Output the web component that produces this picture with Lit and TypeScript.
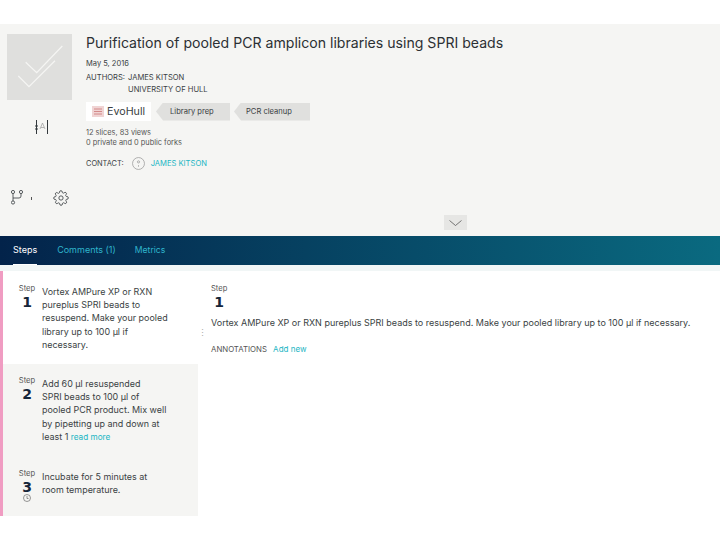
import { LitElement, css, html } from 'lit';
import { customElement } from 'lit/decorators.js';

const steps = [
  { n: 1, text: html`Vortex AMPure XP or RXN<br />pureplus SPRI beads to<br />resuspend. Make your pooled<br />library up to 100 µl if<br />necessary.`, h: 93, top: 14 },
  { n: 2, text: html`Add 60 µl resuspended<br />SPRI beads to 100 µl of<br />pooled PCR product. Mix well<br />by pipetting up and down at<br />least 1 <a>read more</a>`, h: 93, top: 13 },
  { n: 3, text: html`Incubate for 5 minutes at<br />room temperature.`, h: 59, top: 13, timer: true },
];

@customElement('app-root')
export class AppRoot extends LitElement {
  static get styles() {
    return css`
      :host {
        display: block;
        width: 720px;
        height: 540px;
        background: #fff;
        overflow: hidden;
        font-family: 'Inter', 'Liberation Sans', sans-serif;
        color: #3a3f43;
        padding-top: 24px;
        box-sizing: border-box;
      }
      a { color: #22b5c4; }
      .header {
        height: 212px;
        background: #f5f5f3;
        display: flex;
        padding: 10px 0 0 7px;
        box-sizing: border-box;
        position: relative;
      }
      .rail { width: 79px; flex: none; }
      .thumb {
        width: 65px;
        height: 66px;
        background: #dfdfdd;
        display: block;
      }
      .scale { margin: 20px 0 0 28px; display: block; }
      .rail-icons {
        display: flex;
        align-items: center;
        margin: 56px 0 0 4px;
      }
      .tick { width: 1px; height: 3px; background: #555; margin: 0 21px 0 7px; }
      .title {
        font-size: 14.1px;
        line-height: 18px;
        margin: 0;
        font-weight: 400;
        color: #2c3034;
      }
      .date { font-size: 7.5px; line-height: 10px; margin-top: 7px; }
      .authors { display: flex; font-size: 7.6px; line-height: 11.5px; margin-top: 3px; }
      .authors .label { width: 42px; }
      .tags { display: flex; align-items: center; margin-top: 7px; }
      .brand {
        width: 65px;
        height: 19px;
        background: #fff;
        display: flex;
        align-items: center;
        padding-left: 6px;
        box-sizing: border-box;
        gap: 3px;
        font-size: 10.7px;
      }
      .tag {
        height: 18px;
        width: 74px;
        margin-left: 5px;
        background: #e0e0de;
        clip-path: polygon(7px 0, 100% 0, 100% 100%, 7px 100%, 0 50%);
        font-size: 7.6px;
        line-height: 18px;
        padding-left: 14px;
        box-sizing: border-box;
      }
      .tag + .tag { margin-left: 4px; width: 76px; padding-left: 12px; }
      .counts { font-size: 7.4px; line-height: 9.5px; margin-top: 7px; color: #555; }
      .contact { display: flex; align-items: center; font-size: 7.4px; margin-top: 10px; }
      .contact a { margin-left: 6px; font-size: 7.6px; }
      .contact svg { margin-left: 8px; }
      .toggle {
        position: absolute;
        left: 444px;
        top: 191px;
        width: 23px;
        height: 15px;
        background: #e6e6e4;
        display: flex;
        align-items: center;
        justify-content: center;
      }
      .nav {
        height: 29px;
        background: linear-gradient(90deg, #03234a, #0a6a80);
        display: flex;
        gap: 20px;
        padding-left: 13px;
        font-size: 9px;
      }
      .nav div {
        color: #2fb5cc;
        line-height: 28px;
        height: 29px;
        box-sizing: border-box;
      }
      .nav div:last-child { margin-left: -1px; font-size: 8.6px; }
      .nav .on { color: #fff; border-bottom: 1px solid #fff; }
      .strip { height: 6px; background: #f1f6f6; }
      .body { display: flex; }
      .list {
        width: 198px;
        flex: none;
        border-left: 3px solid #f09cc2;
        box-sizing: border-box;
        background: #fff;
      }
      .item {
        display: flex;
        box-sizing: border-box;
        padding-left: 12px;
      }
      .item + .item { background: #f5f5f3; }
      .num { width: 24px; flex: none; text-align: center; margin-right: 3px; }
      .num small { display: block; font-size: 7.6px; line-height: 8px; color: #555; }
      .num b { display: block; font-size: 14px; line-height: 16px; margin-top: 1px; color: #15263a; font-family: 'DejaVu Sans', sans-serif; }
      .timer { display: block; margin: -1px auto 0; }
      .item p { margin: 0; font-size: 8.95px; line-height: 13.2px; }
      .item a { font-size: 8.2px; }
      .dots {
        width: 5px;
        flex: none;
        text-align: center;
        color: #aaa;
        font-size: 9px;
        line-height: 3px;
        padding-top: 60px;
      }
      .detail { padding: 14px 0 0 8px; }
      .detail small { display: block; font-size: 7.6px; line-height: 8px; color: #555; }
      .detail b { display: block; margin-left: 3px; width: 10px; text-align: center; font-size: 14px; line-height: 16px; margin-top: 1px; color: #15263a; font-family: 'DejaVu Sans', sans-serif; }
      .detail p { margin: 6px 0 0; font-size: 9px; line-height: 13px; white-space: nowrap; }
      .notes { font-size: 7.8px; line-height: 10px; margin-top: 15px; color: #555; }
      .notes a { margin-left: 4px; font-size: 8px; }
    `;
  }

  render() {
    return html`
      <div class="header">
        <div class="rail">
          <svg class="thumb" viewBox="0 0 65 66">
            <path d="M18.700 28.300L29.700 38.700L55.300 12" fill="none" stroke="#f5f5f3" stroke-width="1.300"/>
            <path d="M11.300 42L22 52.700L48 26.700" fill="none" stroke="#f5f5f3" stroke-width="1.300"/>
          </svg>
          <svg class="scale" width="13" height="14" viewBox="0 0 13 14">
            <path d="M1.500 0V14M0 6H3M0 9H3M12.500 0V14" fill="none" stroke="#33383c"/>
            <path d="M5 9L7.500 3L10 9M6 7.500H9" fill="none" stroke="#999" stroke-width=".7"/>
          </svg>
          <div class="rail-icons">
            <svg width="13" height="16" viewBox="0 0 13 16" fill="none" stroke="#33383c" stroke-width=".8">
              <circle cx="2" cy="2" r="1.600"/><circle cx="10" cy="2" r="1.600"/><circle cx="2" cy="12.500" r="1.600"/>
              <path d="M2 3.600V10.900M10 3.600V6Q10 8 8 8H2"/>
            </svg>
            <div class="tick"></div>
            <svg width="16" height="16" viewBox="0 0 24 24" fill="none" stroke="#33383c" stroke-width="1.200">
              <circle cx="12" cy="12" r="3.200"/>
              <path d="M19.400 15a1.650 1.650 0 0 0 .33 1.820l.06.06a2 2 0 1 1-2.830 2.830l-.06-.06a1.650 1.650 0 0 0-2.820 1.170V21a2 2 0 1 1-4 0v-.09a1.650 1.650 0 0 0-2.820-1.120l-.06.06a2 2 0 1 1-2.830-2.830l.06-.06a1.650 1.650 0 0 0-1.170-2.820H3a2 2 0 1 1 0-4h.09a1.650 1.650 0 0 0 1.120-2.820l-.06-.06a2 2 0 1 1 2.830-2.830l.06.06a1.650 1.650 0 0 0 2.820-1.170V3a2 2 0 1 1 4 0v.09a1.650 1.650 0 0 0 2.820 1.120l.06-.06a2 2 0 1 1 2.830 2.830l-.06.06a1.650 1.650 0 0 0 1.170 2.820H21a2 2 0 1 1 0 4h-.09a1.650 1.650 0 0 0-1.510 1z"/>
            </svg>
          </div>
        </div>
        <div class="info">
          <h1 class="title">Purification of pooled PCR amplicon libraries using SPRI beads</h1>
          <div class="date">May 5, 2016</div>
          <div class="authors">
            <div class="label">AUTHORS:</div>
            <div>JAMES KITSON<br />UNIVERSITY OF HULL</div>
          </div>
          <div class="tags">
            <div class="brand">
              <svg width="12" height="11" viewBox="0 0 12 11">
                <rect x="0" y="0" width="12" height="11" fill="#f0d4d4"/>
                <path d="M2 3H10M2 5.500H10M2 8H10" stroke="#c77" stroke-width=".8"/>
              </svg>
              EvoHull
            </div>
            <div class="tag">Library prep</div>
            <div class="tag">PCR cleanup</div>
          </div>
          <div class="counts">12 slices, 83 views<br />0 private and 0 public forks</div>
          <div class="contact">
            CONTACT:
            <svg width="13" height="13" viewBox="0 0 12 12" fill="none" stroke="#999" stroke-width=".7">
              <circle cx="6" cy="6" r="5.500"/><circle cx="6" cy="4.500" r="1"/><path d="M6 7.500V9"/>
            </svg>
            <a>JAMES KITSON</a>
          </div>
        </div>
        <div class="toggle">
          <svg width="13" height="6" viewBox="0 0 13 6"><path d="M.5.5L6.500 5.500L12.500.5" fill="none" stroke="#444" stroke-width=".7"/></svg>
        </div>
      </div>
      <div class="nav">
        <div class="on">Steps</div>
        <div>Comments (1)</div>
        <div>Metrics</div>
      </div>
      <div class="strip"></div>
      <div class="body">
        <div class="list">
          ${steps.map((s) => html`
            <div class="item" style="height:${s.h}px;padding-top:${s.top}px">
              <div class="num">
                <small>Step</small><b>${s.n}</b>
                ${s.timer ? html`<svg class="timer" width="8" height="8" viewBox="0 0 8 8" fill="none" stroke="#555" stroke-width=".6"><circle cx="4" cy="4" r="3.500"/><path d="M4 2V4.500H5.500"/></svg>` : ''}
              </div>
              <p>${s.text}</p>
            </div>
          `)}
        </div>
        <div class="dots">⋮</div>
        <div class="detail">
          <small>Step</small><b>1</b>
          <p>Vortex AMPure XP or RXN pureplus SPRI beads to resuspend. Make your pooled library up to 100 µl if necessary.</p>
          <div class="notes">ANNOTATIONS <a>Add new</a></div>
        </div>
      </div>
    `;
  }
}
